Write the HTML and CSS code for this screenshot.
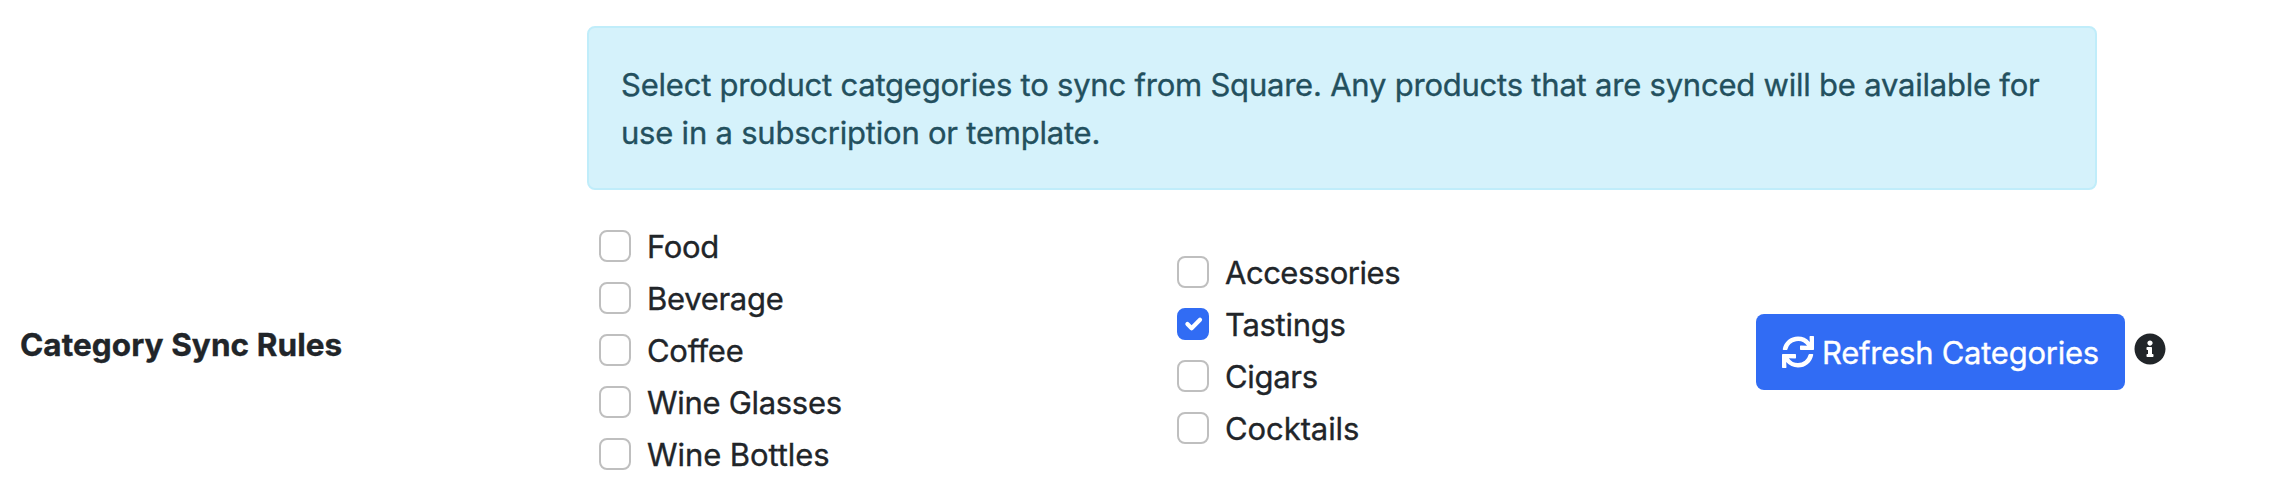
FILE: index.html
```html
<!DOCTYPE html>
<html lang="en">
<head>
<meta charset="utf-8">
<title>Category Sync Rules</title>
<link rel="stylesheet" href="styles.css">
</head>
<body>
<main class="setting">
  <div class="setting-name"><span>Category Sync Rules</span></div>
  <section class="setting-body">
    <div class="alert">
      <span>Select product catgegories to sync from Square. Any products that are synced will be available for</span><br>
      <span>use in a subscription or template.</span>
    </div>
    <div class="categories">
      <div class="category-list">
        <label class="check"><span class="box"></span><span>Food</span></label>
        <label class="check"><span class="box"></span><span>Beverage</span></label>
        <label class="check"><span class="box"></span><span>Coffee</span></label>
        <label class="check"><span class="box"></span><span>Wine Glasses</span></label>
        <label class="check"><span class="box"></span><span class="loose">Wine Bottles</span></label>
      </div>
      <div class="category-list">
        <label class="check"><span class="box"></span><span class="tight">Accessories</span></label>
        <label class="check"><span class="box checked"><svg viewBox="0 0 20 20"><path fill="none" stroke="#fff" stroke-linecap="round" stroke-linejoin="round" stroke-width="3" d="m6 10 3 3 6-6"/></svg></span><span>Tastings</span></label>
        <label class="check"><span class="box"></span><span>Cigars</span></label>
        <label class="check"><span class="box"></span><span class="loose">Cocktails</span></label>
      </div>
      <div class="actions">
        <button class="refresh" type="button">
          <svg class="icon" viewBox="0 0 512 512"><path fill="currentColor" d="M440.65 12.57l4 82.77A247.16 247.16 0 0 0 255.83 8C134.73 8 33.91 94.92 12.29 209.82A12 12 0 0 0 24.09 224h49.05a12 12 0 0 0 11.67-9.26 175.91 175.91 0 0 1 317-56.94l-101.46-4.86a12 12 0 0 0-12.57 12v47.41a12 12 0 0 0 12 12H500a12 12 0 0 0 12-12V12a12 12 0 0 0-12-12h-47.37a12 12 0 0 0-11.98 12.57zM255.83 432a175.61 175.61 0 0 1-146-77.8l101.8 4.87a12 12 0 0 0 12.57-12v-47.4a12 12 0 0 0-12-12H12a12 12 0 0 0-12 12V500a12 12 0 0 0 12 12h47.35a12 12 0 0 0 12-12.6l-4.15-82.57A247.17 247.17 0 0 0 255.83 504c121.11 0 221.93-86.92 243.55-201.82a12 12 0 0 0-11.8-14.18h-49.05a12 12 0 0 0-11.67 9.26A175.86 175.86 0 0 1 255.83 432z"/></svg>
          <span>Refresh Categories</span>
        </button>
        <svg class="icon info" viewBox="0 0 512 512"><path fill="currentColor" d="M256 8C119.043 8 8 119.083 8 256c0 136.997 111.043 248 248 248s248-111.003 248-248C504 119.083 392.957 8 256 8zm0 110c23.196 0 42 18.804 42 42s-18.804 42-42 42-42-18.804-42-42 18.804-42 42-42zm56 254c0 6.627-5.373 12-12 12h-88c-6.627 0-12-5.373-12-12v-24c0-6.627 5.373-12 12-12h12v-64h-12c-6.627 0-12-5.373-12-12v-24c0-6.627 5.373-12 12-12h64c6.627 0 12 5.373 12 12v100h12c6.627 0 12 5.373 12 12v24z"/></svg>
      </div>
    </div>
  </section>
</main>
</body>
</html>
```
FILE: styles.css
```css
* { box-sizing: border-box; }
body {
  margin: 0;
  background: #fff;
  color: #212529;
  font: 400 31px/48px Inter, "Liberation Sans", sans-serif;
  letter-spacing: -0.3px;
  white-space: nowrap;
  -webkit-text-stroke: 0.35px currentColor;
}
.setting {
  display: grid;
  grid-template-columns: 567px 1fr;
  padding: 26px 0 0 20px;
}
.setting-name {
  align-self: end;
  padding-bottom: 113px;
  font-size: 31.5px;
  font-weight: 700;
  letter-spacing: 0.07px;
}
.alert {
  width: 1510px;
  height: 164px;
  padding: 33px 32px 31px;
  border: 2px solid #c0edfa;
  border-radius: 8px;
  background: #d5f2fb;
  color: #23505e;
  letter-spacing: -0.22px;
}
.categories {
  display: grid;
  grid-template-columns: 578px 579px auto;
  justify-content: start;
  align-items: center;
  padding: 32px 0 0 12px;
}
.check {
  display: flex;
  gap: 16px;
  height: 52px;
  padding-top: 1px;
}
.box {
  width: 32px;
  height: 32px;
  margin-top: 7px;
  border: 2px solid #bfbfbf;
  border-radius: 8px;
}
.box svg { display: block; width: 28px; height: 28px; }
.checked { background: #316cf4; border-color: #316cf4; }
.loose { letter-spacing: -0.08px; }
.tight { letter-spacing: -0.48px; }
.actions { display: flex; align-items: center; gap: 9px; }
.refresh {
  display: flex;
  align-items: center;
  gap: 8px;
  width: 369px;
  height: 76px;
  padding: 0 0 0 26px;
  border: 0;
  border-radius: 8px;
  background: #316cf4;
  color: #fff;
  font: inherit;
  letter-spacing: -0.25px;
}
.refresh span { padding-top: 2px; }
.icon { display: block; flex: none; width: 32px; height: 32px; }
.info { margin-bottom: 6px; }
```
